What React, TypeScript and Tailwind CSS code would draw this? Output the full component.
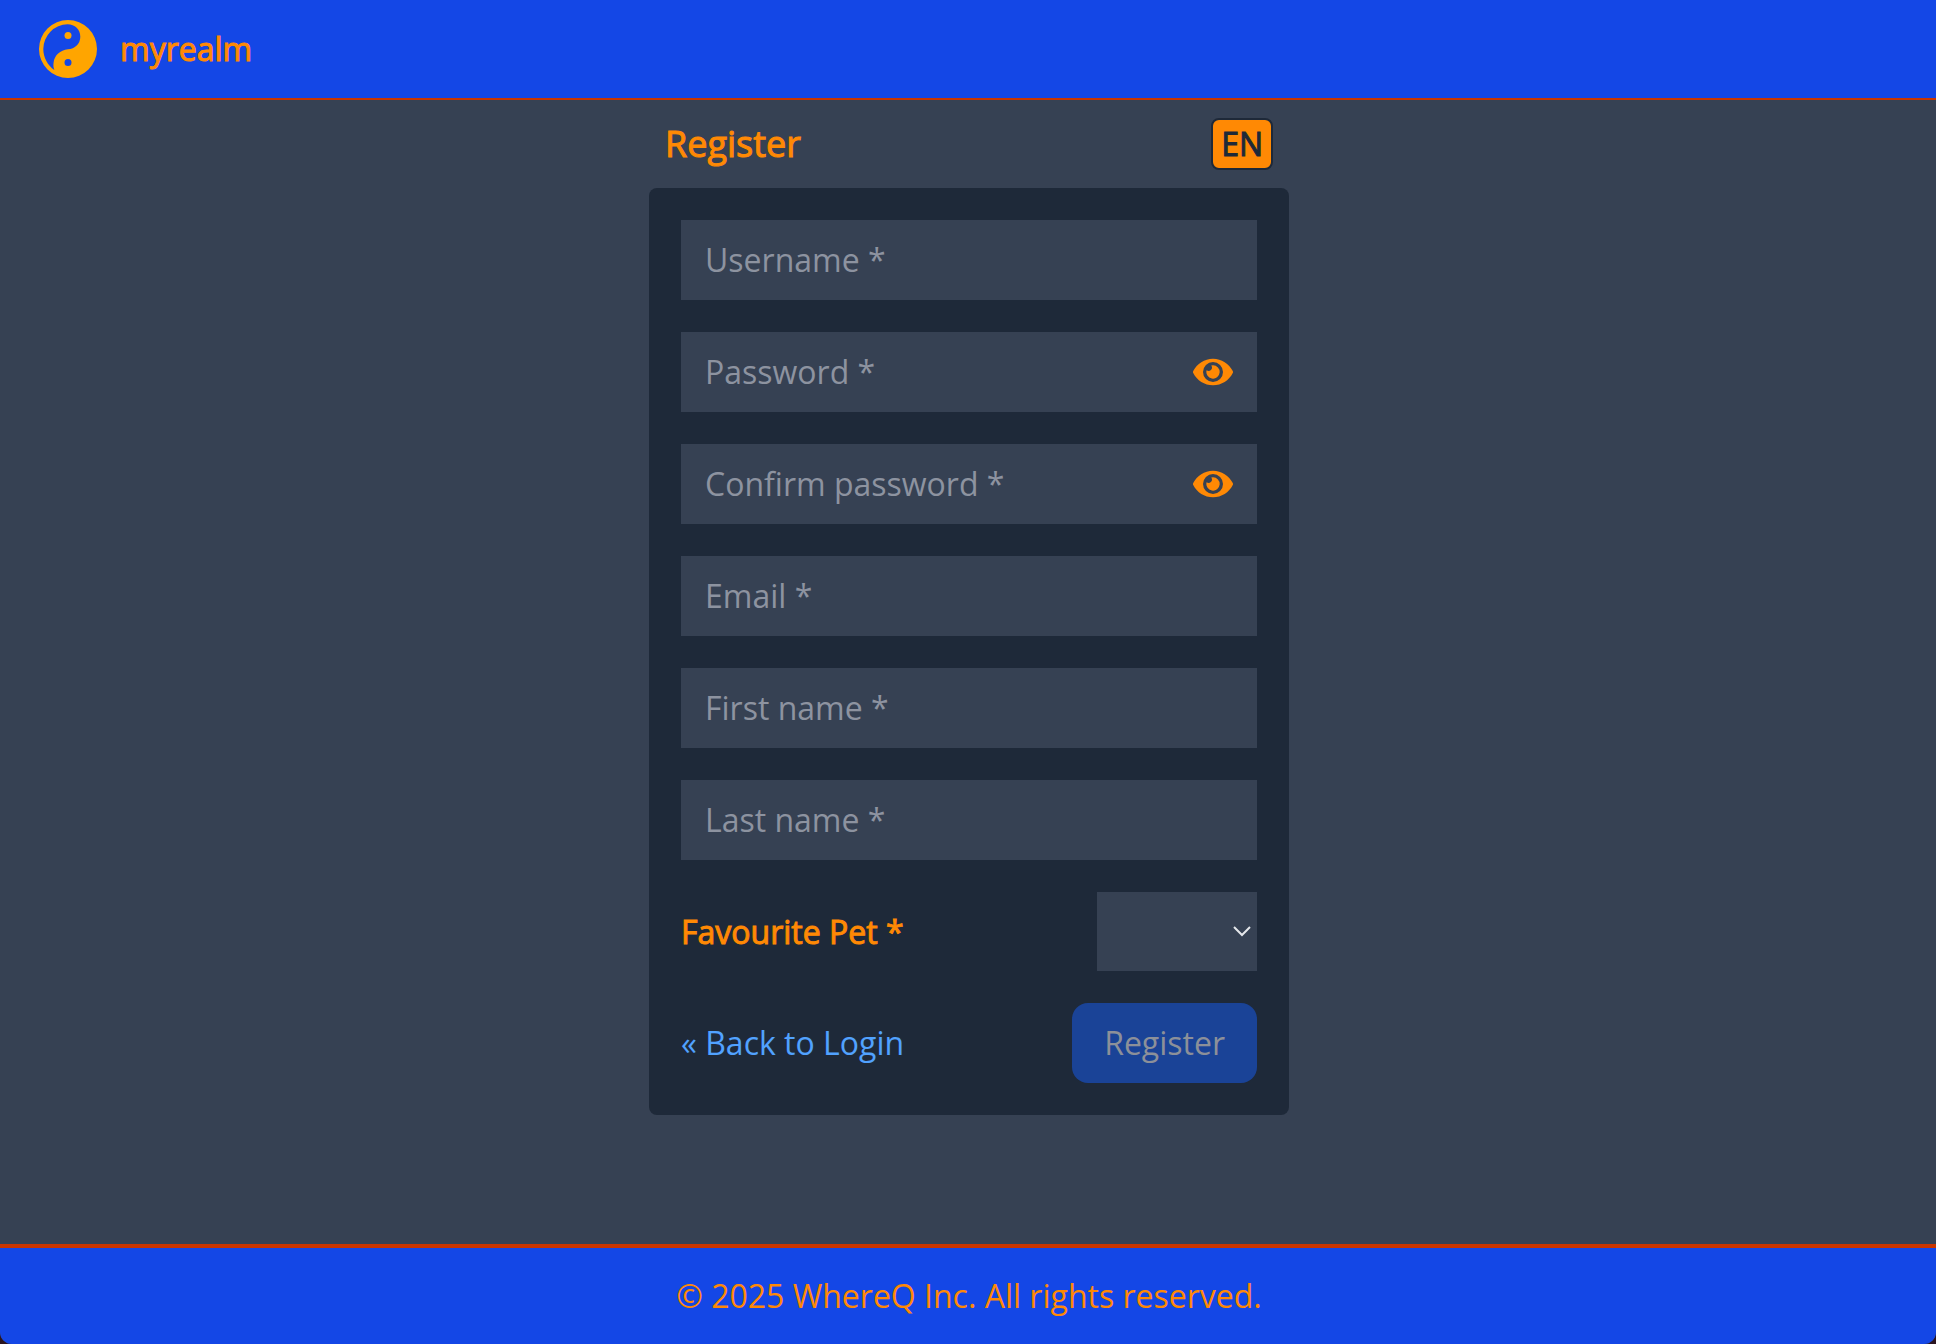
import React from "react";
import { FaEye } from "react-icons/fa";

const fieldClass =
  "block h-20 w-full bg-gray-700 px-6 pb-0.5 text-[32px] text-gray-200 placeholder:text-[#8d93a0] outline-none focus:ring-2 focus:ring-orange-400";

function Logo() {
  return (
    <svg viewBox="0 0 58 58" className="size-[58px]" aria-hidden="true">
      <path
        fill="#ffa500"
        fillRule="evenodd"
        d="M29 0A29 29 0 1 1 29 58A29 29 0 1 1 29 0Z
           M28.600 4.300A24.700 24.700 0 0 0 4.300 29C4.300 37.800 8.800 45.400 15.400 50C14.400 47.600 14.200 45.200 14.600 42.400C15.600 35.200 21 30 29 29.200A12.500 12.500 0 0 0 41.300 16.700C41.300 9.300 35.800 4.300 28.600 4.300Z
           M29 38.900A3.500 3.500 0 1 1 29 45.900A3.500 3.500 0 1 1 29 38.900Z"
      />
      <circle cx="29" cy="15.500" r="3.500" fill="#ffa500" />
    </svg>
  );
}

function TextField({ name, label, type = "text" }: { name: string; label: string; type?: string }) {
  return <input name={name} type={type} aria-label={label} placeholder={`${label} *`} className={fieldClass} />;
}

function PasswordField({ name, label }: { name: string; label: string }) {
  const [shown, setShown] = React.useState(false);
  return (
    <div className="relative">
      <TextField name={name} label={label} type={shown ? "text" : "password"} />
      <button
        type="button"
        aria-label={`Show ${label.toLowerCase()}`}
        onClick={() => setShown(!shown)}
        className="absolute inset-y-0 right-6 flex items-center text-orange-400"
      >
        <FaEye className="size-10" />
      </button>
    </div>
  );
}

export default function App() {
  return (
    <div className="bg-[#2a1420] font-['Open_Sans',sans-serif] text-[32px] leading-[48px]">
      <div className="flex min-h-screen flex-col overflow-hidden rounded-b-xl bg-gray-700">
        <header className="flex h-[100px] items-center gap-[23px] border-b-2 border-orange-700 bg-blue-700 px-[39px]">
          <Logo />
          <span className="text-orange-400 [-webkit-text-stroke:1px_#ff8904]">myrealm</span>
        </header>

        <main className="flex flex-1 flex-col items-center pl-0.5">
          <div className="w-full max-w-[640px]">
            <div className="flex h-[88px] items-center justify-between px-4">
              <h1 className="text-[36px] text-orange-400 [-webkit-text-stroke:1px_#ff8904]">Register</h1>
              <button
                type="button"
                className="rounded-lg border-2 border-gray-800 bg-orange-400 px-2 text-gray-800 [-webkit-text-stroke:1px_#1e2939]"
              >
                EN
              </button>
            </div>

            <form className="flex flex-col gap-8 rounded-lg bg-gray-800 p-8" onSubmit={(e) => e.preventDefault()}>
              <TextField name="username" label="Username" />
              <PasswordField name="password" label="Password" />
              <PasswordField name="confirm" label="Confirm password" />
              <TextField name="email" label="Email" type="email" />
              <TextField name="firstName" label="First name" />
              <TextField name="lastName" label="Last name" />

              <div className="flex items-center justify-between">
                <label htmlFor="pet" className="text-orange-400 [-webkit-text-stroke:1px_#ff8904]">
                  Favourite Pet *
                </label>
                <div className="relative">
                  <select
                    id="pet"
                    defaultValue=""
                    className="block h-[79px] w-40 appearance-none bg-gray-700 px-4 text-gray-200 outline-none"
                  >
                    <option value=""></option>
                    <option value="cat">Cat</option>
                    <option value="dog">Dog</option>
                  </select>
                  <svg
                    viewBox="0 0 18 12"
                    className="pointer-events-none absolute top-[34px] right-1.5 h-3 w-[18px]"
                    fill="none"
                    stroke="#e5e7eb"
                    strokeWidth="2"
                    aria-hidden="true"
                  >
                    <path d="M1 1L9 9L17 1" />
                  </svg>
                </div>
              </div>

              <div className="flex items-center justify-between">
                <a href="#login" className="text-blue-400">
                  « Back to Login
                </a>
                <button type="submit" disabled className="h-20 rounded-2xl bg-[#1a4397] px-8 text-[#8c9099]">
                  Register
                </button>
              </div>
            </form>
          </div>
        </main>

        <footer className="flex h-[100px] items-center justify-center border-t-4 border-orange-700 bg-blue-700 pl-0.5 text-orange-400">
          <p>© 2025 WhereQ Inc. All rights reserved.</p>
        </footer>
      </div>
    </div>
  );
}
